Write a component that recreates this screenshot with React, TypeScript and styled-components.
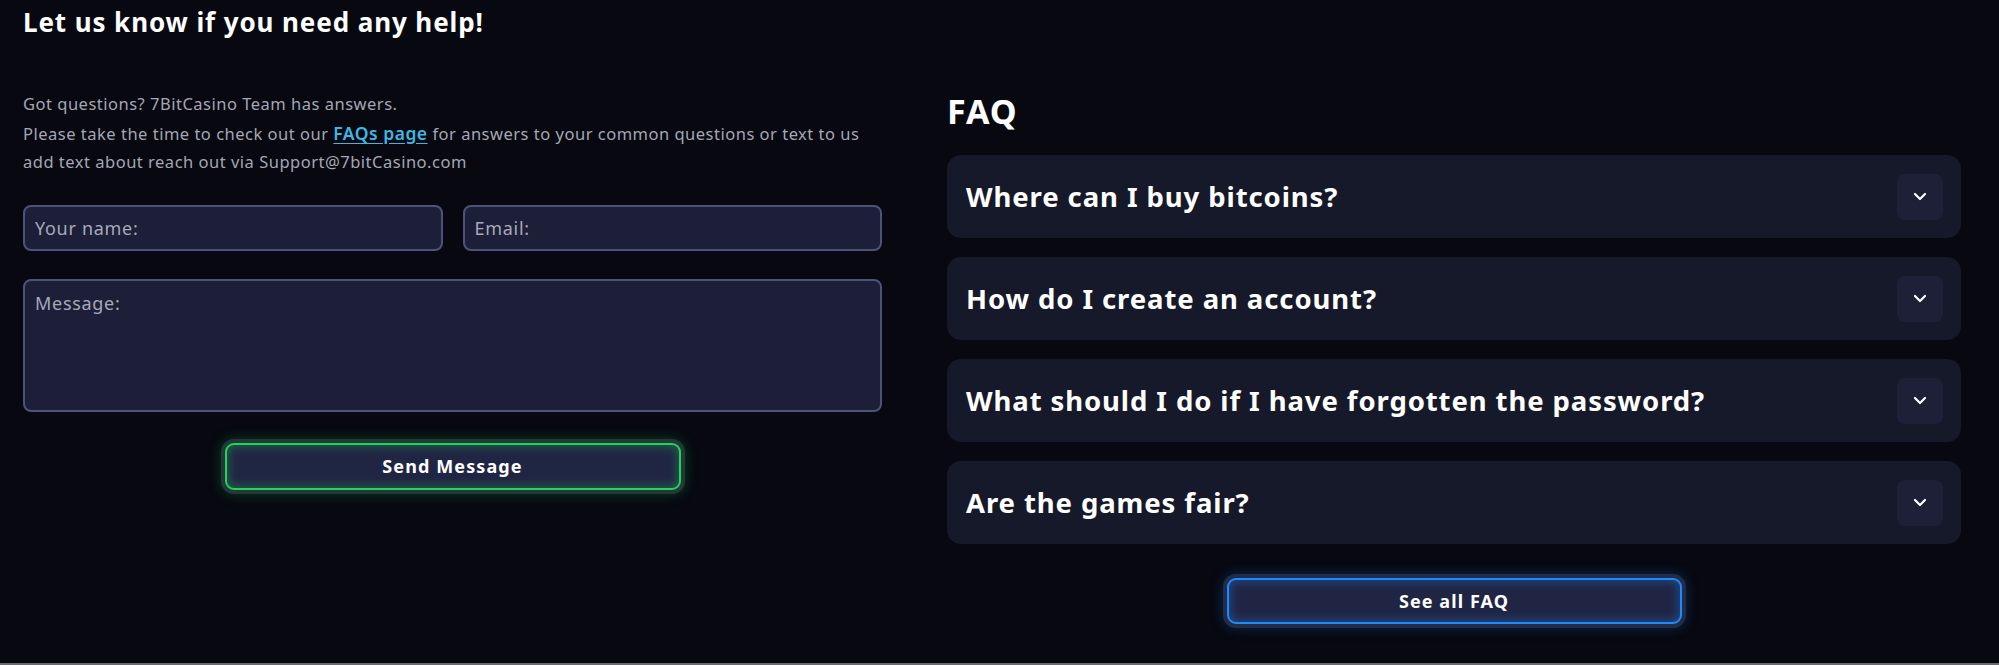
import React from 'react'
import styled, { createGlobalStyle } from 'styled-components'

const GlobalStyle = createGlobalStyle`
  html, body {
    margin: 0;
    padding: 0;
    background: #070810;
  }
  * {
    box-sizing: border-box;
  }
`

const font = `'Noto Sans', 'Open Sans', Arial, sans-serif`

const Page = styled.div`
  height: 665px;
  padding: 6px 38px 0 23px;
  background: #070810;
  border-bottom: 2px solid #6a6a6e;
  font-family: ${font};
  color: #fff;
`

const Title = styled.h1`
  margin: 0;
  font-size: 26px;
  line-height: 32px;
  font-weight: 700;
  letter-spacing: 0.9px;
  color: #fff;
`

const Columns = styled.div`
  display: grid;
  grid-template-columns: 859px 1fr;
  column-gap: 65px;
  margin-top: 52px;
`

const ContactColumn = styled.section`
  display: flex;
  flex-direction: column;
`

const Intro = styled.p`
  margin: 0;
  font-size: 16.5px;
  letter-spacing: 0.5px;
  line-height: 28.5px;
  color: #a4a7b4;
`

const Link = styled.a`
  color: #3fb7e2;
  font-weight: 600;
  font-size: 17.5px;
  text-decoration: underline;
  text-underline-offset: 3px;
`

const Form = styled.form`
  display: flex;
  flex-direction: column;
  gap: 28px;
  margin-top: 28px;
`

const FieldRow = styled.div`
  display: grid;
  grid-template-columns: 1fr 1fr;
  gap: 20px;
`

const fieldStyles = `
  width: 100%;
  background: #1c1f37;
  border: 2px solid #4d5279;
  border-radius: 8px;
  color: #fff;
  font-family: ${font};
  font-size: 18px;
  letter-spacing: 0.7px;
  padding: 0 10px;
  outline: none;
  &::placeholder {
    color: #a6a9ba;
  }
`

const Input = styled.input`
  ${fieldStyles}
  height: 46px;
`

const TextArea = styled.textarea`
  ${fieldStyles}
  height: 133px;
  padding-top: 10px;
  resize: none;
  line-height: 24px;
`

const ButtonRow = styled.div`
  display: flex;
  justify-content: center;
  margin-top: 3px;
`

const GlowButton = styled.button<{ $glow: string; $halo: string; $w: number; $h: number }>`
  width: ${({ $w }) => $w}px;
  height: ${({ $h }) => $h}px;
  border: 2px solid ${({ $glow }) => $glow};
  border-radius: 9px;
  background: #212544;
  box-shadow: 0 0 0 4px ${({ $halo }) => $halo}, 0 0 14px 4px ${({ $glow }) => $glow}40,
    inset 0 0 10px 2px ${({ $glow }) => $glow}55;
  color: #fff;
  font-family: ${font};
  font-size: 18px;
  letter-spacing: 1.1px;
  font-weight: 700;
  cursor: pointer;
`

const FaqColumn = styled.section`
  display: flex;
  flex-direction: column;
`

const FaqHeading = styled.h2`
  margin: 1px 0 0;
  font-size: 34px;
  line-height: 40px;
  letter-spacing: 1px;
  font-weight: 700;
`

const FaqList = styled.div`
  display: flex;
  flex-direction: column;
  gap: 19px;
  margin-top: 24px;
`

const FaqItem = styled.div`
  height: 83px;
  display: flex;
  align-items: center;
  justify-content: space-between;
  padding: 0 18px 0 19px;
  background: #161929;
  border-radius: 14px;
`

const Question = styled.span`
  font-size: 27.5px;
  letter-spacing: 0.9px;
  font-weight: 700;
  color: #fff;
`

const Toggle = styled.span`
  width: 46px;
  height: 46px;
  border-radius: 8px;
  background: #1d2037;
  display: flex;
  align-items: center;
  justify-content: center;
`

const FaqFooter = styled.div`
  display: flex;
  justify-content: center;
  margin-top: 34px;
`

const Chevron = () => (
  <svg width="14" height="9" viewBox="0 0 14 9" fill="none">
    <path d="M2 2l5 5 5-5" stroke="#fff" strokeWidth="2.2" strokeLinecap="round" strokeLinejoin="round" />
  </svg>
)

const questions = [
  'Where can I buy bitcoins?',
  'How do I create an account?',
  'What should I do if I have forgotten the password?',
  'Are the games fair?',
]

const App = () => (
  <>
    <GlobalStyle />
    <Page>
      <Title>Let us know if you need any help!</Title>
      <Columns>
        <ContactColumn>
          <Intro>
            Got questions? 7BitCasino Team has answers.
            <br />
            Please take the time to check out our <Link href="#">FAQs page</Link> for answers to your common
            questions or text to us
            <br />
            add text about reach out via Support@7bitCasino.com
          </Intro>
          <Form onSubmit={(e) => e.preventDefault()}>
            <FieldRow>
              <Input placeholder="Your name:" />
              <Input placeholder="Email:" />
            </FieldRow>
            <TextArea placeholder="Message:" />
            <ButtonRow>
              <GlowButton type="submit" $glow="#1fd655" $halo="#24383a" $w={456} $h={47}>
                Send Message
              </GlowButton>
            </ButtonRow>
          </Form>
        </ContactColumn>
        <FaqColumn>
          <FaqHeading>FAQ</FaqHeading>
          <FaqList>
            {questions.map((q) => (
              <FaqItem key={q}>
                <Question>{q}</Question>
                <Toggle>
                  <Chevron />
                </Toggle>
              </FaqItem>
            ))}
          </FaqList>
          <FaqFooter>
            <GlowButton type="button" $glow="#1b8cff" $halo="#222c48" $w={455} $h={46}>
              See all FAQ
            </GlowButton>
          </FaqFooter>
        </FaqColumn>
      </Columns>
    </Page>
  </>
)

export default App
